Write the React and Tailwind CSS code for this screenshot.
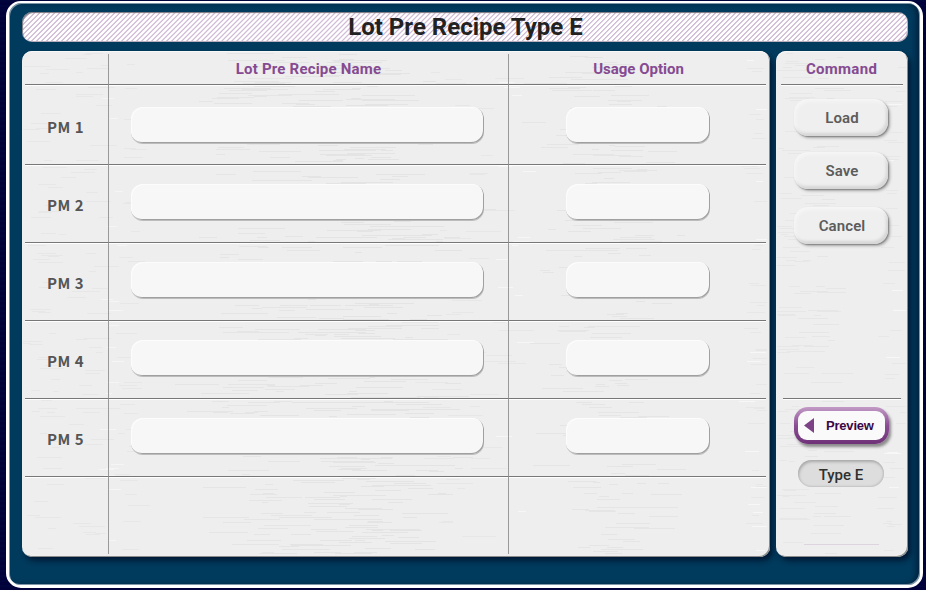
const SANS = "font-['Roboto','Liberation_Sans',sans-serif]";

// Small deterministic generator so the brushed texture is stable between renders.
function makeRandom(seed) {
  let s = seed;
  return () => {
    s = (s * 1664525 + 1013904223) % 4294967296;
    return s / 4294967296;
  };
}

function makeStreaks(seed, width, height, clusters) {
  const rnd = makeRandom(seed);
  const out = [];
  clusters.forEach(([cx, spread, count, color, maxLen]) => {
    for (let i = 0; i < count; i++) {
      const g = (rnd() + rnd() + rnd()) / 1.5 - 1;
      const len = 6 + rnd() * maxLen;
      const x = Math.max(1, Math.round(cx + g * spread - len / 2));
      const y = 2 + Math.floor(rnd() * (height - 5));
      out.push({ x, y, w: Math.round(Math.min(len, width - x - 2)), color });
    }
  });
  return out.filter((s) => s.w > 0);
}

const MAIN = makeStreaks(11, 747, 506, [
  [24, 24, 60, "#e7e7e7", 20],
  [70, 25, 45, "#e7e7e7", 22],
  [108, 14, 30, "#e7e7e7", 16],
  [90, 14, 20, "#f5f5f5", 12],
  [240, 75, 190, "#e5e5e5", 42],
  [350, 110, 380, "#e4e4e4", 50],
  [440, 60, 60, "#e7e7e7", 30],
  [490, 26, 14, "#f6f6f6", 12],
  [590, 90, 240, "#e5e5e5", 38],
  [736, 12, 40, "#e7e7e7", 12],
  [732, 12, 14, "#f7f7f7", 12],
]);

const SIDE = makeStreaks(29, 132, 506, [
  [16, 20, 70, "#e7e7e7", 24],
  [48, 26, 70, "#e6e6e6", 26],
  [118, 14, 40, "#e7e7e7", 14],
  [118, 14, 8, "#f7f7f7", 12],
]);

function Texture({ streaks }) {
  return (
    <svg className="pointer-events-none absolute inset-0 h-full w-full" shapeRendering="crispEdges">
      {streaks.map((s, i) => (
        <rect key={i} x={s.x} y={s.y} width={s.w} height="1" fill={s.color} />
      ))}
    </svg>
  );
}

const PANEL =
  "relative h-[506px] overflow-hidden rounded-[10px] bg-[#eeeeee] shadow-[inset_-1px_-1px_0_#8b8b8b,inset_0_1px_0_#f8f8f8]";

function Field({ className }) {
  return (
    <div
      className={`h-9 rounded-[12px] bg-[#f7f7f7] shadow-[inset_-1px_-1px_0_#a0a0a0,inset_1px_1px_0_#fcfcfc,0_1px_0_#bcbcbc] ${className}`}
    />
  );
}

function HeadCell({ children, className = "" }) {
  return (
    <div
      className={`flex items-center justify-center border-b border-[#777777] text-[15px] leading-none font-bold whitespace-nowrap text-[#854a91] ${className}`}
    >
      {children}
    </div>
  );
}

function Row({ label, first }) {
  const cell = "flex border-b border-[#777777] shadow-[inset_0_1px_0_#ffffff]";
  return (
    <>
      <div
        className={`${cell} items-center justify-center border-r border-r-[#999999] ${first ? "pt-[4px]" : "pt-[2px]"} pr-[2px] font-['Noto_Sans_CJK_JP',sans-serif] text-[15px] leading-none font-bold tracking-[0.5px] text-[#555555]`}
      >
        {label}
      </div>
      <div className={`${cell} border-r border-r-[#999999] pl-[22px] ${first ? "pt-[22px]" : "pt-[19px]"}`}>
        <Field className="w-[353px]" />
      </div>
      <div className={`${cell} pl-[57px] ${first ? "pt-[22px]" : "pt-[19px]"}`}>
        <Field className="w-[144px]" />
      </div>
    </>
  );
}

function CommandButton({ children, className = "" }) {
  return (
    <button
      className={`ml-[18px] flex h-[37px] w-[94px] items-center justify-center rounded-[14px] bg-[#efefef] pt-[2px] pl-[2px] text-[15px] leading-none font-semibold tracking-[0.1px] text-[#5c5c5c] shadow-[inset_2px_3px_3px_#f5f5f5,inset_-2px_-3px_3px_#d6d6d6,1px_1px_1px_#8a8a8a,2px_2px_3px_#a8a8a8] ${className}`}
    >
      {children}
    </button>
  );
}

export default function App() {
  return (
    <div
      className={`h-[590px] w-[926px] overflow-hidden bg-[#00003a] bg-[repeating-linear-gradient(0deg,#00003a_0px,#00003a_3px,#000a3c_4px,#00003a_5px)] pt-px pl-[6px] ${SANS}`}
    >
      <div className="h-[587px] w-[917px] rounded-[15px] border-[3px] border-t-2 border-white bg-[#003a5c] pt-[9px] pl-[13px] shadow-[inset_1px_1px_0_#7d97a8,inset_-1px_-1px_0_#7d97a8,inset_-4px_0_5px_#00233f]">
        <header className="flex h-[30px] w-[886px] items-center justify-center rounded-[10px] bg-white bg-[repeating-linear-gradient(135deg,#ffffff_0px,#ffffff_1.6px,#d0bcd6_2.2px,#d0bcd6_2.8px,#ffffff_3.54px)] pl-px text-[24px] leading-none font-bold whitespace-nowrap text-[#222222] shadow-[inset_1px_1px_1px_#77757c,inset_-1px_-1px_0_#b9b0bf]">
          Lot Pre Recipe Type E
        </header>

        <div className="mt-[9px] flex gap-[7px]">
          <div className="rounded-[10px] shadow-[3px_4px_5px_#001b36]">
            <main className={`${PANEL} w-[748px]`}>
              <Texture streaks={MAIN} />
              <div className="relative grid h-full grid-cols-[84px_400px_257px] grid-rows-[31px_80px_78px_78px_78px_78px_77px] pt-[3px] pl-[3px]">
                <HeadCell className="border-r border-r-[#999999]" />
                <HeadCell className="border-r border-r-[#999999] tracking-[0.2px]">Lot Pre Recipe Name</HeadCell>
                <HeadCell className="pl-[2px]">Usage Option</HeadCell>
                <Row label="PM 1" first />
                <Row label="PM 2" />
                <Row label="PM 3" />
                <Row label="PM 4" />
                <Row label="PM 5" />
                <div className="border-r border-[#999999] shadow-[inset_0_1px_0_#ffffff]" />
                <div className="border-r border-[#999999] shadow-[inset_0_1px_0_#ffffff]" />
                <div className="shadow-[inset_0_1px_0_#ffffff]" />
              </div>
            </main>
          </div>

          <div className="-ml-px rounded-[10px] shadow-[3px_4px_5px_#001b36]">
            <aside className={`${PANEL} w-[132px]`}>
              <Texture streaks={SIDE} />
              <div className="relative flex flex-col">
                <h2 className="mx-[5px] flex h-[34px] items-center justify-center border-b border-[#777777] pt-[3px] pr-px text-[15px] leading-none font-bold tracking-[0.3px] text-[#854a91] shadow-[0_1px_0_#ffffff]">
                  Command
                </h2>
                <CommandButton className="mt-[14px]">Load</CommandButton>
                <CommandButton className="mt-[16px]">Save</CommandButton>
                <CommandButton className="mt-[18px]">Cancel</CommandButton>
                <div className="mt-[154px] ml-[7px] h-px w-[118px] bg-[#777777] shadow-[0_1px_0_#ffffff]" />
                <button className="mt-[8px] ml-[18px] flex h-[37px] w-[95px] items-center rounded-[14px] bg-gradient-to-b from-[#c29ac6] via-[#8a4d93] to-[#6f3279] p-[4px] shadow-[2px_3px_3px_#8a8a8a]">
                  <span className="flex h-full w-full items-center rounded-[9px] bg-[#fafafa] pl-[6px] font-['Liberation_Sans',sans-serif] text-[13px] leading-none font-bold text-[#3b0845]">
                    <svg className="mr-[12px] h-[15px] w-[10px] shrink-0" viewBox="0 0 10 15">
                      <path d="M10 0V15L0 7.5Z" fill="#7d4285" />
                    </svg>
                    <span className="tracking-[-0.2px]">Preview</span>
                  </span>
                </button>
                <div className="mt-[16px] ml-[22px] flex h-[27px] w-[86px] items-center justify-center rounded-full bg-[#dddddd] pt-[3px] text-[15px] leading-none font-medium text-[#303030] shadow-[inset_1px_2px_3px_#a9a9a9,inset_-1px_-1px_2px_#c4c4c4]">
                  Type E
                </div>
                <div className="mt-[57px] ml-[28px] h-px w-[75px] bg-[#ddd4df]" />
              </div>
            </aside>
          </div>
        </div>
      </div>
    </div>
  );
}
